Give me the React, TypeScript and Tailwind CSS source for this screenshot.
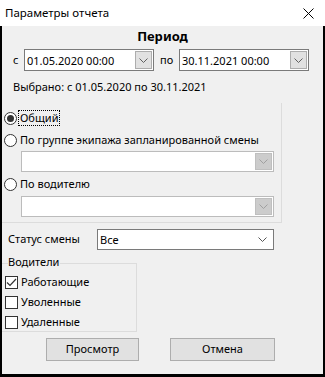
import React from "react";

const font = { fontFamily: '"Noto Sans", "Liberation Sans", sans-serif' };

function Chevron({ color = "#555" }: { color?: string }) {
  return (
    <svg width="9" height="5" viewBox="0 0 9 5" className="block">
      <path d="M0.5 0.5 L4.5 4.5 L8.5 0.5" fill="none" stroke={color} strokeWidth="1" />
    </svg>
  );
}

function DateBox({ value, w }: { value: string; w: string }) {
  return (
    <div className={`${w} h-[22px] border border-[#7a7a7a] bg-white flex items-center justify-between pl-[2px] pr-[1px]`}>
      <span className="text-[11px] leading-none text-black">{value}</span>
      <div className="w-[17px] h-[18px] border border-[#adadad] bg-[#e1e1e1] flex items-center justify-center">
        <Chevron color="#606060" />
      </div>
    </div>
  );
}

function DisabledCombo() {
  return (
    <div className="ml-[19px] w-[253px] h-[21px] border border-[#bcbcbc] bg-white flex items-center justify-end pr-[1px]">
      <div className="w-[17px] h-[17px] border border-[#bfbfbf] bg-[#cccccc] flex items-center justify-center">
        <Chevron color="#a0a0a0" />
      </div>
    </div>
  );
}

function Radio({ checked, label, focus }: { checked?: boolean; label: string; focus?: boolean }) {
  return (
    <div className="flex items-center h-[16px]">
      <div className="w-[13px] h-[13px] ml-[2px] rounded-full border border-[#333] bg-white flex items-center justify-center">
        {checked && <div className="w-[7px] h-[7px] rounded-full bg-[#333]" />}
      </div>
      <span className={`ml-[2px] text-[11px] leading-[14px] px-[1px] ${focus ? "outline-1 outline-dotted outline-black" : ""}`}>{label}</span>
    </div>
  );
}

function Check({ checked, label }: { checked?: boolean; label: string }) {
  return (
    <div className="flex items-center h-[16px]">
      <div className="w-[13px] h-[13px] ml-[3px] border border-[#333] bg-white flex items-center justify-center">
        {checked && (
          <svg width="11" height="9" viewBox="0 0 11 9">
            <path d="M1 4.5 L4 7.5 L10 1" fill="none" stroke="#333" strokeWidth="1.2" />
          </svg>
        )}
      </div>
      <span className="ml-[3px] text-[11px] leading-[14px]">{label}</span>
    </div>
  );
}

export default function App() {
  return (
    <div className="w-[325px] h-[377px] bg-black flex flex-col pl-[2px] pr-[2px] pb-[3px] text-black" style={font}>
      <div className="h-[26px] bg-white flex items-center justify-between -mx-[2px] pl-[5px] pr-[11px]">
        <span className="text-[11.5px]">Параметры отчета</span>
        <svg width="11" height="11" viewBox="0 0 11 11">
          <path d="M0.5 0.5 L10.5 10.5 M10.5 0.5 L0.5 10.5" stroke="#000" strokeWidth="1" />
        </svg>
      </div>
      <div className="flex-1 bg-[#f0f0f0] flex flex-col">
        <div className="text-center font-bold text-[13px] leading-[16px] mt-[2px]">Период</div>
        <div className="flex items-center mt-[5px]">
          <span className="ml-[11px] w-[11px] text-[11px]">с</span>
          <DateBox value="01.05.2020 00:00" w="w-[130px]" />
          <span className="ml-[6px] w-[19px] text-[11px]">по</span>
          <DateBox value="30.11.2021 00:00" w="w-[130px]" />
        </div>
        <div className="ml-[11px] mt-[9px] text-[11px] leading-[14px]">Выбрано: с 01.05.2020 по 30.11.2021</div>
        <div className="mt-[9px] w-[280px] h-[120px] border-r border-b border-[#dcdcdc] flex flex-col pt-[7px]">
          <Radio checked focus label="Общий" />
          <div className="mt-[6px]"><Radio label="По группе экипажа запланированной смены" /></div>
          <div className="mt-[3px]"><DisabledCombo /></div>
          <div className="mt-[4px]"><Radio label="По водителю" /></div>
          <div className="mt-[4px]"><DisabledCombo /></div>
        </div>
        <div className="flex items-center mt-[6px]">
          <span className="ml-[6px] w-[89px] text-[11px]">Статус смены</span>
          <div className="w-[177px] h-[21px] border border-[#7a7a7a] bg-white flex items-center justify-between pl-[2px] pr-[6px]">
            <span className="text-[11px] leading-none">Все</span>
            <Chevron color="#555" />
          </div>
        </div>
        <div className="relative mt-[13px] w-[135px] h-[69px] border-t border-r border-b border-[#dcdcdc] flex flex-col pt-[10px]">
          <span className="absolute -top-[9px] left-[6px] bg-[#f0f0f0] pr-[1px] text-[11px] leading-[14px]">Водители</span>
          <Check checked label="Работающие" />
          <div className="mt-[4px]"><Check label="Уволенные" /></div>
          <div className="mt-[4px]"><Check label="Удаленные" /></div>
        </div>
        <div className="flex mt-[6px]">
          <button className="ml-[44px] w-[93px] h-[23px] border border-[#adadad] bg-[#e1e1e1] text-[11px]">Просмотр</button>
          <button className="ml-[31px] w-[105px] h-[23px] border border-[#adadad] bg-[#e1e1e1] text-[11px]">Отмена</button>
        </div>
      </div>
    </div>
  );
}
